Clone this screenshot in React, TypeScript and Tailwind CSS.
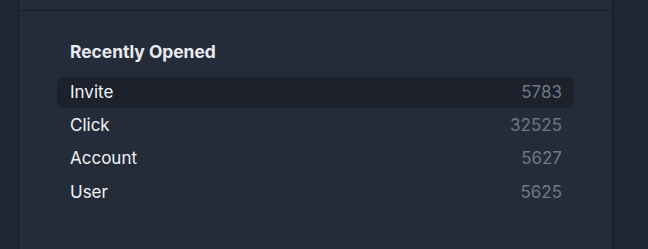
import React from "react";

interface Item {
  name: string;
  count: number;
}

const items: Item[] = [
  { name: "Invite", count: 5783 },
  { name: "Click", count: 32525 },
  { name: "Account", count: 5627 },
  { name: "User", count: 5625 },
];

const RecentRow: React.FC<{ item: Item; active?: boolean }> = ({ item, active }) => (
  <div
    className={`flex h-[31px] items-center justify-between rounded-md pl-[13px] pr-[12px] ${
      active ? "bg-[#1c212b]" : ""
    }`}
  >
    <span className="text-[17px] text-[#f1f3f6]">{item.name}</span>
    <span className="text-[17px] text-[#6f7888]">{item.count}</span>
  </div>
);

export default function App() {
  return (
    <div
      className="flex h-[249px] w-[648px] bg-[#1f2632]"
      style={{ fontFamily: "Inter, 'Noto Sans', sans-serif" }}
    >
      <div className="w-[18px]" />
      <div className="flex w-[595px] flex-col border-x border-[#1a202a] bg-[#242c39]">
        <div className="h-[11px] border-b border-[#1a202a]" />
        <div className="flex flex-col px-[38px] pt-[30px]">
          <h2 className="px-[13px] text-[17.4px] font-bold leading-[22px] text-[#e8ebf0]">
            Recently Opened
          </h2>
          <div className="mt-[14px] flex flex-col gap-[2.33px]">
            {items.map((item, i) => (
              <RecentRow key={item.name} item={item} active={i === 0} />
            ))}
          </div>
        </div>
      </div>
      <div className="flex-1" />
    </div>
  );
}
